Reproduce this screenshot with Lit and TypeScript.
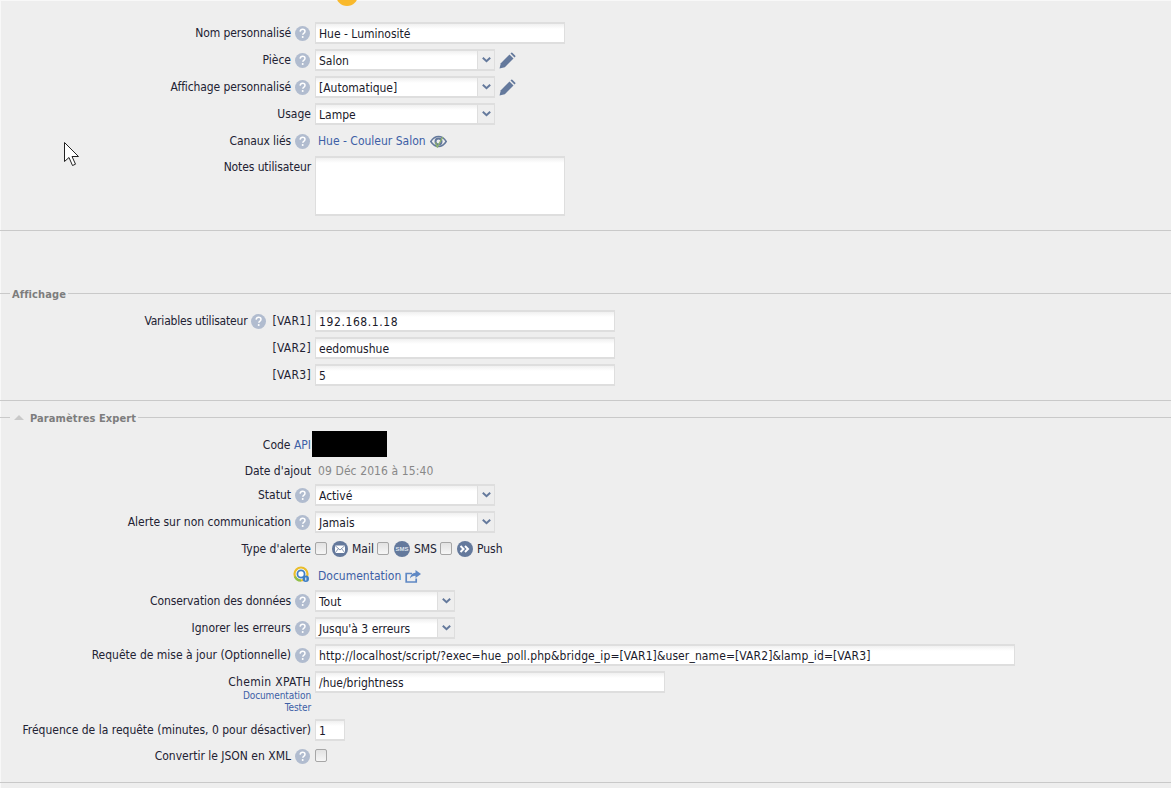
import { LitElement, html, css, svg } from "lit";
import { customElement } from "lit/decorators.js";

const help = html`<svg class="help" width="15" height="15" viewBox="0 0 15 15"><circle cx="7.5" cy="7.5" r="7.5" fill="#b1bccf"/><path d="M5.1 5.6c.2-1.5 1.2-2.3 2.5-2.3 1.4 0 2.4.9 2.4 2 0 1-.6 1.5-1.3 2-.6.4-.9.7-.9 1.4" fill="none" stroke="#fff" stroke-width="1.5"/><circle cx="7.7" cy="11" r="1" fill="#fff"/></svg>`;

const pencil = html`<svg class="pencil" width="17" height="17" viewBox="0 0 17 17"><path d="M.5 16.500l1.300-5.300 8.700-8.700 4 4-8.700 8.700z" fill="#64799c"/><path d="M11.500 1.500l1-1 .8.200 3 3 .2.800-1 1z" fill="#64799c"/></svg>`;

const eye = html`<svg class="eye" width="17" height="13" viewBox="0 0 17 13"><path d="M.8 6.500C3 3 5.600 1.500 8.500 1.500s5.500 1.500 7.700 5c-2.200 3.500-4.800 5-7.700 5S3 10 .8 6.500z" fill="none" stroke="#64799c" stroke-width="1.500"/><circle cx="8.500" cy="6.500" r="3" fill="none" stroke="#64799c" stroke-width="2"/><path d="M5.500 7.500l1.800 4.500 5.500-10" fill="none" stroke="#8db36a" stroke-width="1.300"/></svg>`;

const roundIcon = (inner: unknown) => html`<svg class="ricon" width="16" height="16" viewBox="0 0 16 16"><circle cx="8" cy="8" r="8" fill="#64799c"/>${inner}</svg>`;

const mail = roundIcon(svg`<rect x="3" y="4.500" width="10" height="7.500" fill="#fff"/><path d="M3 4.500L8 9l5-4.500M3 12l3.500-4.500M13 12L9.500 7.500" fill="none" stroke="#64799c" stroke-width=".8"/>`);
const sms = roundIcon(svg`<text x="8" y="10" text-anchor="middle" font-size="6" font-family="Liberation Sans, sans-serif" font-weight="700" fill="#dfe4ec">SMS</text>`);
const push = roundIcon(svg`<path d="M3.500 5l3 3-3 3M8 5l3 3-3 3" fill="none" stroke="#fff" stroke-width="2"/>`);

const docIcon = html`<svg class="docicon" width="18" height="18" viewBox="0 0 18 18"><circle cx="8" cy="8" r="6.500" fill="#fff" stroke="#e9bd2c" stroke-width="2.200"/><path d="M1.900 10.500A6.500 6.500 0 0 0 8 14.500" fill="none" stroke="#8fbf4a" stroke-width="2.200"/><circle cx="8" cy="8" r="3.600" fill="#fff" stroke="#3f7fc4" stroke-width="1.800"/><circle cx="12.800" cy="12.800" r="3.200" fill="#3f7fc4"/><rect x="12.300" y="11.500" width="1" height="3" fill="#fff"/></svg>`;

const share = html`<svg class="share" width="16" height="13" viewBox="0 0 16 13"><path d="M7 3.500H1.200v8.500h10V8.500" fill="none" stroke="#5f88c4" stroke-width="1.700"/><path d="M10.500 0L16 4l-5.500 4V5.700C8 5.700 6.300 6.500 5 8.500c.3-3 2.300-5.500 5.500-5.700z" fill="#5f88c4"/></svg>`;

@customElement("app-root")
export class AppRoot extends LitElement {
  static styles = css`
    :host {
      display: block;
      position: relative;
      height: 788px;
      overflow: hidden;
      background: #eeeeee;
      box-shadow: inset 1px 1px 0 #f8f8f8;
      font-family: "DejaVu Sans", sans-serif;
      font-stretch: condensed;
      font-size: 12px;
      color: #222233;
    }
    .page { padding-top: 22px; }
    .row { display: flex; gap: 4px; margin-bottom: 5px; min-height: 22px; }
    .label {
      flex: 0 0 311px;
      display: flex;
      flex-direction: column;
      align-items: flex-end;
      line-height: 20px;
      white-space: nowrap;
    }
    .labelline { display: flex; align-items: flex-start; gap: 4px; height: 20px; line-height: 22px; }
    .tight { letter-spacing: -0.1px; }
    .vartight { letter-spacing: -0.2px; }
    .wide { letter-spacing: 0.3px; }
    .help { flex: none; margin-top: 4px; margin-right: 1px; }
    .varline .help { margin-right: 2px; }
    .value { display: flex; align-items: center; gap: 4px; height: 22px; }
    .box {
      box-sizing: border-box;
      height: 22px;
      border: 2px solid #dedede;
      border-width: 2px 1px 2px 1px;
      background: linear-gradient(#f0f0f0 0, #ffffff 5px);
      padding: 0 3px;
      line-height: 20px;
      color: #1a1a2a;
      white-space: nowrap;
      overflow: hidden;
    }
    .w250 { width: 250px; }
    .w300 { width: 300px; }
    .w350 { width: 350px; }
    .w700 { width: 700px; }
    .w30 { width: 30px; }
    .area { width: 250px; height: 60px; }
    .digits { letter-spacing: 0.6px; }
    .url { letter-spacing: 0.1px; }
    .select {
      display: flex;
      box-sizing: border-box;
      height: 22px;
      border: 1px solid #dedede;
      border-top-width: 2px;
      border-bottom-width: 2px;
      background: linear-gradient(#f0f0f0 0, #ffffff 5px);
    }
    .s180 { width: 180px; }
    .s140 { width: 140px; }
    .select .txt { flex: 1; padding: 0 3px; line-height: 20px; color: #1a1a2a; white-space: nowrap; }
    .select .arrow {
      flex: 0 0 17px;
      box-sizing: border-box;
      border-left: 1px solid #dedede;
      background: #eeeeee;
      display: flex;
      align-items: center;
      justify-content: center;
    }
    .link { color: #3d5fa6; }
    .linkval { padding-left: 3px; gap: 4px; }
    .muted { color: #888888; padding-left: 3px; letter-spacing: 0.1px; }
    .hr { height: 1px; background: #c9c9c9; }
    .legend { display: flex; align-items: center; gap: 2px; height: 14px; font-weight: 700; color: #7d7d7d; font-size: 11px; letter-spacing: 0.1px; }
    .legend span { position: relative; top: 1px; }
    .legend .l { height: 1px; background: #c9c9c9; }
    .legend .l.a { flex: 0 0 10px; }
    .legend .l.b { flex: 1; }
    .tri { width: 0; height: 0; border: 5px solid transparent; border-top: 0; border-bottom: 5px solid #c9c9c9; margin: 0 4px 0 2px; }
    .mask { width: 75px; height: 26px; background: #000; margin-left: -3px; align-self: flex-start; }
    .code { height: 26px; margin-bottom: 3px; }
    .codeline { margin-top: 3px; }
    .dateline { margin-bottom: 2px; }
    .check {
      box-sizing: border-box;
      width: 12px;
      height: 13px;
      border: 1px solid #a6a6a6;
      border-radius: 2px;
      background: linear-gradient(#e2e2e2, #f6f6f6);
      flex: none;
      position: relative;
      top: -1px;
    }
    .alerts { gap: 4px; }
    .alerts .check { margin-right: 1px; }
    .alerts span { margin-right: -1px; }
    .docrow { margin-bottom: 3px; }
    .docicon { position: relative; top: 1px; }
    .small { font-size: 10px; line-height: 12px; color: #3d5fa6; letter-spacing: -0.1px; position: relative; top: -1px; }
    .xpath { margin-bottom: 4px; }
    .frequence { margin-bottom: 4px; }
    .cursor { position: absolute; left: 64px; top: 142px; }
    .sun { position: absolute; left: 336px; top: -16px; width: 22px; height: 22px; border-radius: 50%; background: #f9b92c; }
  `;

  private label(t: string, h = true, cls = "") {
    return html`<div class="label"><div class="labelline"><span class=${cls}>${t}</span>${h ? help : ""}</div></div>`;
  }
  private sel(t: string, w = "s180") {
    return html`<div class="select ${w}"><div class="txt">${t}</div><div class="arrow"><svg width="9" height="6" viewBox="0 0 9 6"><path d="M.8.800l3.700 3.400L8.200.800" fill="none" stroke="#64799c" stroke-width="2"/></svg></div></div>`;
  }

  render() {
    return html`
      <div class="sun"></div>
      <div class="page">
        <div class="row">${this.label("Nom personnalisé", true, "tight")}<div class="value"><div class="box w250">Hue - Luminosité</div></div></div>
        <div class="row">${this.label("Pièce")}<div class="value">${this.sel("Salon")}${pencil}</div></div>
        <div class="row">${this.label("Affichage personnalisé", true, "tight")}<div class="value">${this.sel("[Automatique]")}${pencil}</div></div>
        <div class="row">${this.label("Usage", false)}<div class="value">${this.sel("Lampe")}</div></div>
        <div class="row" style="margin-bottom:4px">${this.label("Canaux liés", true, "tight")}<div class="value linkval"><span class="link">Hue - Couleur Salon</span>${eye}</div></div>
        <div class="row" style="margin-bottom:14px">${this.label("Notes utilisateur", false, "tight")}<div class="box area"></div></div>
        <div class="hr" style="margin-bottom:55px"></div>
        <div class="legend" style="margin-bottom:10px"><div class="l a"></div><span>Affichage</span><div class="l b"></div></div>
        <div class="row"><div class="label"><div class="labelline varline"><span class="vartight">Variables utilisateur</span>${help}<span class="wide">[VAR1]</span></div></div><div class="value"><div class="box w300"><span class="digits">192.168.1.18</span></div></div></div>
        <div class="row">${this.label("[VAR2]", false, "wide")}<div class="value"><div class="box w300">eedomushue</div></div></div>
        <div class="row" style="margin-bottom:14px">${this.label("[VAR3]", false, "wide")}<div class="value"><div class="box w300">5</div></div></div>
        <div class="hr" style="margin-bottom:9px"></div>
        <div class="legend" style="margin-bottom:7px"><div class="l a"></div><div class="tri"></div><span>Paramètres Expert</span><div class="l b"></div></div>
        <div class="row code"><div class="label"><div class="labelline codeline"><span>Code <span class="link">API</span></span></div></div><div class="mask"></div></div>
        <div class="row dateline">${this.label("Date d'ajout", false)}<div class="value"><span class="muted">09 Déc 2016 à 15:40</span></div></div>
        <div class="row">${this.label("Statut")}<div class="value">${this.sel("Activé")}</div></div>
        <div class="row">${this.label("Alerte sur non communication")}<div class="value">${this.sel("Jamais")}</div></div>
        <div class="row">${this.label("Type d'alerte", false)}<div class="value alerts"><div class="check"></div>${mail}<span>Mail</span><div class="check"></div>${sms}<span>SMS</span><div class="check"></div>${push}<span>Push</span></div></div>
        <div class="row docrow"><div class="label"><div class="labelline">${docIcon}</div></div><div class="value linkval"><span class="link">Documentation</span>${share}</div></div>
        <div class="row">${this.label("Conservation des données", true, "tight")}<div class="value">${this.sel("Tout", "s140")}</div></div>
        <div class="row">${this.label("Ignorer les erreurs")}<div class="value">${this.sel("Jusqu'à 3 erreurs", "s140")}</div></div>
        <div class="row">${this.label("Requête de mise à jour (Optionnelle)")}<div class="value"><div class="box w700"><span class="url">http://localhost/script/?exec=hue_poll.php&bridge_ip=[VAR1]&user_name=[VAR2]&lamp_id=[VAR3]</span></div></div></div>
        <div class="row xpath"><div class="label"><div class="labelline"><span class="wide">Chemin XPATH</span></div><div class="small">Documentation</div><div class="small">Tester</div></div><div class="value"><div class="box w350">/hue/brightness</div></div></div>
        <div class="row frequence">${this.label("Fréquence de la requête (minutes, 0 pour désactiver)", false)}<div class="value"><div class="box w30">1</div></div></div>
        <div class="row" style="margin-bottom:15px">${this.label("Convertir le JSON en XML")}<div class="value"><div class="check"></div></div></div>
        <div class="hr"></div>
      </div>
      <svg class="cursor" width="16" height="25" viewBox="0 0 16 25"><path d="M.5.500v19l4.500-4 3.500 8 3-1.300-3.500-7.700h6.500z" fill="#fff" stroke="#222" stroke-width="1"/></svg>
    `;
  }
}
